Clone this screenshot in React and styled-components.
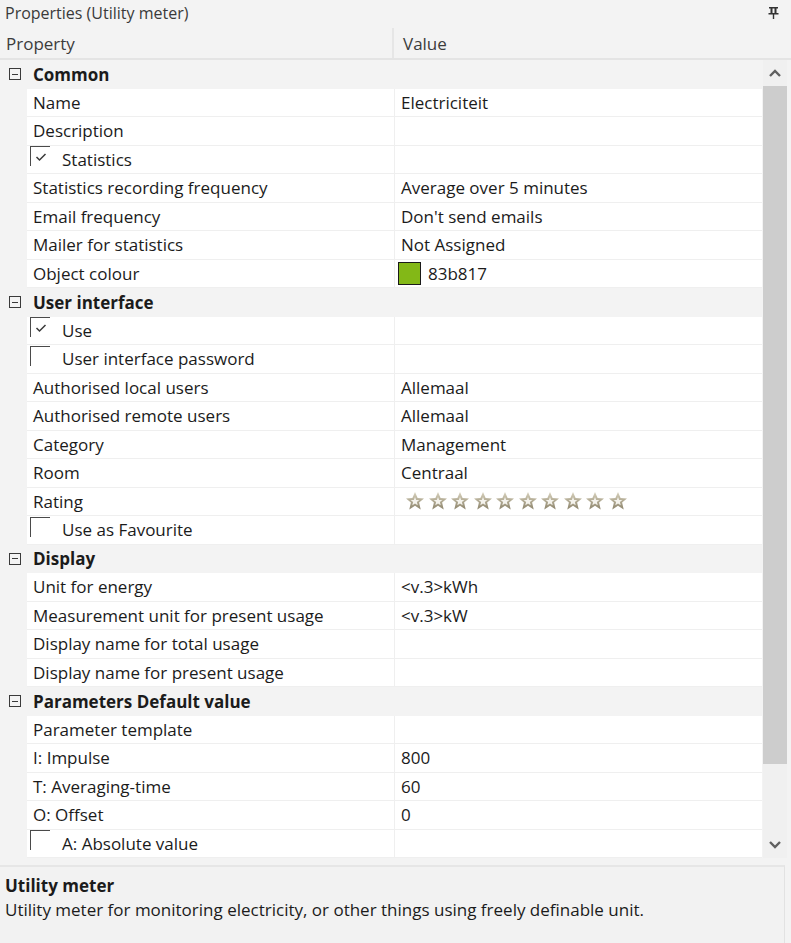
import React from 'react';
import styled, { createGlobalStyle } from 'styled-components';

const GlobalStyle = createGlobalStyle`
  body {
    margin: 0;
    background: #f3f3f3;
    font-family: "Open Sans", "Noto Sans", sans-serif;
    color: #1b1b1b;
  }
`;

const ROW = 28.5;

const Panel = styled.div`
  width: 791px;
  height: 943px;
  display: flex;
  flex-direction: column;
  background: #f3f3f3;
  font-size: 17px;
  overflow: hidden;
`;

const TitleBar = styled.div`
  height: 25px;
  display: flex;
  align-items: center;
  justify-content: space-between;
  padding: 0 12px 0 5px;
  color: #3a3a3a;
  font-size: 16px;
`;

const Header = styled.div`
  height: 30px;
  margin-top: 3px;
  display: grid;
  grid-template-columns: 394px 1fr;
  border-bottom: 2px solid #e4e4e4;
  color: #3c3c3c;
`;

const HeaderCell = styled.div`
  display: flex;
  align-items: center;
  padding-left: ${p => p.$pad}px;
  border-right: ${p => (p.$divider ? '2px solid #e6e6e6' : 'none')};
`;

const Body = styled.div`
  display: flex;
  height: ${ROW * 28}px;
`;

const Grid = styled.div`
  width: 762px;
  display: flex;
  flex-direction: column;
`;

const Row = styled.div`
  height: ${ROW}px;
  box-sizing: border-box;
  display: grid;
  grid-template-columns: 27px 367px 1fr;
  background: ${p => (p.$category ? '#f3f3f3' : '#ffffff')};
`;

const Gutter = styled.div`
  background: #f3f3f3;
  display: flex;
  align-items: center;
  justify-content: center;
`;

const Cell = styled.div`
  display: flex;
  align-items: center;
  gap: 7px;
  padding-left: ${p => p.$pad}px;
  border-bottom: ${p => (p.$category ? 'none' : '1px solid #efefef')};
  border-left: ${p => (p.$value ? '1px solid #efefef' : 'none')};
  white-space: nowrap;
  font-weight: ${p => (p.$bold ? 700 : 400)};
`;

const ExpandBox = styled.span`
  width: 10px;
  height: 10px;
  border: 1px solid #3a3a3a;
  position: relative;
  margin-left: 2px;
  &::after {
    content: '';
    position: absolute;
    left: 2px;
    right: 2px;
    top: 4.5px;
    height: 1px;
    background: #3a3a3a;
  }
`;

const Check = styled.span`
  width: 19px;
  height: 19px;
  border-top: 1px solid #4a4a4a;
  border-left: 1px solid #4a4a4a;
  display: flex;
  align-items: center;
  justify-content: center;
  margin-right: 5px;
  margin-top: -6px;
`;

const Swatch = styled.span`
  width: 21px;
  height: 21px;
  border: 1.5px solid #1a1a1a;
  background: ${p => p.$color};
  margin-left: -3px;
`;

const Stars = styled.div`
  display: flex;
  gap: 2.5px;
  margin-left: 4px;
`;

const Scrollbar = styled.div`
  width: 24px;
  margin-left: 1px;
  background: #f0f0f0;
  display: flex;
  flex-direction: column;
  align-items: center;
`;

const Arrow = styled.div`
  height: 26px;
  width: 100%;
  display: flex;
  align-items: center;
  justify-content: center;
`;

const Thumb = styled.div`
  width: 100%;
  height: 678px;
  background: #cdcdcd;
`;

const Description = styled.div`
  margin-top: 7px;
  flex: 1;
  border-top: 2px solid #e6e6e6;
  border-right: 1px solid #e2e2e2;
  width: 785px;
  background: #f2f2f2;
  padding: 8px 5px;
  box-sizing: border-box;
`;

const DescTitle = styled.div`
  font-weight: 700;
  font-size: 17px;
  line-height: 22px;
`;

const DescText = styled.div`
  line-height: 26px;
`;

const CheckMark = () => (
  <svg width="12" height="10" viewBox="0 0 12 10">
    <path d="M1.5 5 L4.5 8 L10.5 2" fill="none" stroke="#3a3a3a" strokeWidth="1.5" />
  </svg>
);

const Star = () => (
  <svg width="20" height="20" viewBox="0 0 20 20">
    <defs>
      <linearGradient id="sg" x1="0" y1="0" x2="0" y2="1">
        <stop offset="0" stopColor="#d8d2bd" />
        <stop offset="1" stopColor="#8d846c" />
      </linearGradient>
    </defs>
    <path
      d="M10 1 L12.6 7 L19 7.4 L14.1 11.6 L15.7 18.5 L10 14.8 L4.3 18.5 L5.9 11.6 L1 7.4 L7.4 7 Z"
      fill="url(#sg)"
    />
    <path
      d="M10 6 L11.2 8.9 L14.3 9.1 L11.9 11.1 L12.7 14.2 L10 12.4 L7.3 14.2 L8.1 11.1 L5.7 9.1 L8.8 8.9 Z"
      fill="#f4f2ec"
    />
  </svg>
);

const Pin = () => (
  <svg width="11" height="13" viewBox="0 0 11 13">
    <rect x="1" y="1" width="9" height="1.5" fill="#333" />
    <rect x="2.5" y="1" width="2" height="7" fill="#333" />
    <rect x="6.5" y="1" width="2" height="7" fill="#333" />
    <rect x="0.5" y="7" width="10" height="1.5" fill="#333" />
    <rect x="4.8" y="8" width="1.4" height="5" fill="#333" />
  </svg>
);

const Chevron = ({ down }) => (
  <svg width="12" height="8" viewBox="0 0 12 8" style={down ? { transform: 'rotate(180deg)' } : undefined}>
    <path d="M1 7 L6 2 L11 7" fill="none" stroke="#606060" strokeWidth="2.4" />
  </svg>
);

const rows = [
  { cat: 'Common' },
  { name: 'Name', value: 'Electriciteit' },
  { name: 'Description' },
  { name: 'Statistics', check: true, checked: true },
  { name: 'Statistics recording frequency', value: 'Average over 5 minutes' },
  { name: 'Email frequency', value: "Don't send emails" },
  { name: 'Mailer for statistics', value: 'Not Assigned' },
  { name: 'Object colour', value: '83b817', color: '#83b817' },
  { cat: 'User interface' },
  { name: 'Use', check: true, checked: true },
  { name: 'User interface password', check: true },
  { name: 'Authorised local users', value: 'Allemaal' },
  { name: 'Authorised remote users', value: 'Allemaal' },
  { name: 'Category', value: 'Management' },
  { name: 'Room', value: 'Centraal' },
  { name: 'Rating', stars: 10 },
  { name: 'Use as Favourite', check: true },
  { cat: 'Display' },
  { name: 'Unit for energy', value: '<v.3>kWh' },
  { name: 'Measurement unit for present usage', value: '<v.3>kW' },
  { name: 'Display name for total usage' },
  { name: 'Display name for present usage' },
  { cat: 'Parameters Default value' },
  { name: 'Parameter template' },
  { name: 'I: Impulse', value: '800' },
  { name: 'T: Averaging-time', value: '60' },
  { name: 'O: Offset', value: '0' },
  { name: 'A: Absolute value', check: true },
];

function PropertyRow({ row }) {
  if (row.cat) {
    return (
      <Row $category>
        <Gutter>
          <ExpandBox />
        </Gutter>
        <Cell $category $bold $pad={6}>{row.cat}</Cell>
        <Cell $category />
      </Row>
    );
  }
  return (
    <Row>
      <Gutter />
      <Cell $pad={row.check ? 3 : 6}>
        {row.check && <Check>{row.checked && <CheckMark />}</Check>}
        {row.name}
      </Cell>
      <Cell $value $pad={6}>
        {row.color && <Swatch $color={row.color} />}
        {row.value}
        {row.stars && (
          <Stars>
            {Array.from({ length: row.stars }, (_, i) => (
              <Star key={i} />
            ))}
          </Stars>
        )}
      </Cell>
    </Row>
  );
}

export default function App() {
  return (
    <Panel>
      <GlobalStyle />
      <TitleBar>
        <span>Properties (Utility meter)</span>
        <Pin />
      </TitleBar>
      <Header>
        <HeaderCell $pad={6} $divider>Property</HeaderCell>
        <HeaderCell $pad={9}>Value</HeaderCell>
      </Header>
      <Body>
        <Grid>
          {rows.map((r, i) => (
            <PropertyRow key={i} row={r} />
          ))}
        </Grid>
        <Scrollbar>
          <Arrow>
            <Chevron />
          </Arrow>
          <Thumb />
          <div style={{ flex: 1 }} />
          <Arrow>
            <Chevron down />
          </Arrow>
        </Scrollbar>
      </Body>
      <Description>
        <DescTitle>Utility meter</DescTitle>
        <DescText>Utility meter for monitoring electricity, or other things using freely definable unit.</DescText>
      </Description>
    </Panel>
  );
}
